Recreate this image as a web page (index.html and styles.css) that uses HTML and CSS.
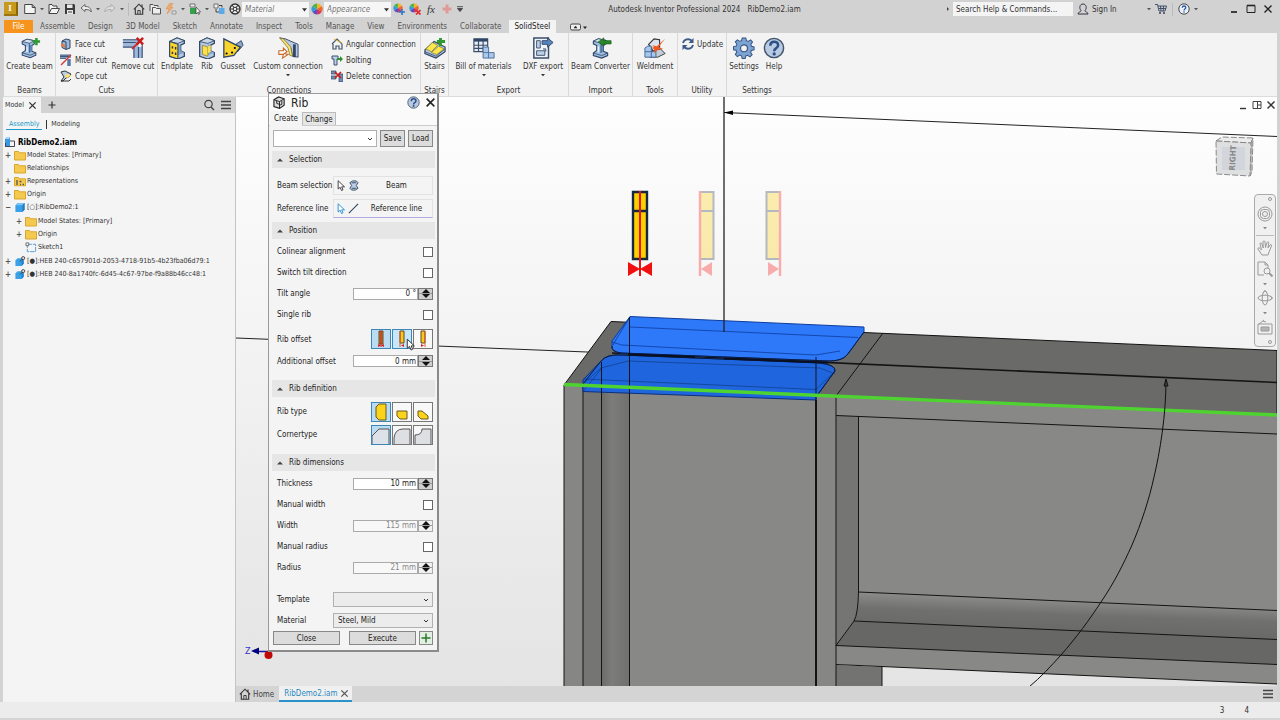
FILE: index.html
```html
<!DOCTYPE html>
<html lang="en">
<head>
<meta charset="utf-8">
<title>Autodesk Inventor Professional 2024 - RibDemo2.iam</title>
<link rel="stylesheet" href="styles.css">
</head>
<body>
<svg class="defs" aria-hidden="true">
  <symbol id="wheel" viewBox="0 0 12 12"><path d="M6 6V.5A5.5 5.5 0 0 1 10.800 3.200z" fill="#f7b52c"/><path d="M6 6l4.800-2.800a5.500 5.500 0 0 1 0 5.600z" fill="#f0662a"/><path d="M6 6l4.800 2.800A5.500 5.500 0 0 1 6 11.500z" fill="#d8345c"/><path d="M6 6v5.500a5.500 5.500 0 0 1-4.800-2.700z" fill="#5b4fc0"/><path d="M6 6L1.200 8.800a5.500 5.500 0 0 1 0-5.600z" fill="#2d9be0"/><path d="M6 6L1.200 3.200A5.500 5.500 0 0 1 6 .5z" fill="#4cb648"/></symbol>
  <symbol id="x" viewBox="0 0 10 10"><path d="M1.500 1.500l7 7M8.500 1.500l-7 7" stroke="currentColor" stroke-width="1.400" fill="none"/></symbol>
  <symbol id="menu" viewBox="0 0 10 10"><path d="M0 1.500h10M0 5h10M0 8.500h10" stroke="#444" stroke-width="1.400"/></symbol>
  <symbol id="home" viewBox="0 0 12 12"><path d="M.8 6.300L6 1.200l5.200 5.100M2.300 5.500v5.700h7.400V5.500M9 1.500v2.300" fill="none" stroke="#333" stroke-width="1.100"/><path d="M4.800 11V7.500h2.400V11" fill="none" stroke="#333" stroke-width=".9"/></symbol>
  <symbol id="folder" viewBox="0 0 12 10"><path d="M.5 1h4l1 1.300h6V9.500H.5z" fill="#f5c950" stroke="#d9a62c"/></symbol>
  <symbol id="cube" viewBox="0 0 12 12"><path d="M1 3.500L3.500 1H11v7.500L8.500 11H1z" fill="#3aa0e8"/><path d="M1 3.500L3.500 1H11L8.500 3.500z" fill="#7cc4f5"/><path d="M11 1v7.500L8.500 11V3.500z" fill="#1f80c8"/></symbol>
  <symbol id="part" viewBox="0 0 12 12"><path d="M1 4.500L3.500 2.500H10v6L7.800 11H1z" fill="#3aa0e8"/><path d="M10 4.500v4L7.800 11V5z" fill="#1f80c8"/><circle cx="9.500" cy="2.300" r="1.700" fill="#ddd" stroke="#333" stroke-width=".9"/><path d="M8.300 3.600L6 6" stroke="#333"/></symbol>
  <symbol id="beam" viewBox="0 0 24 24"><path d="M4 4l6-3 9 2v4l-3 2v7l5 2v3l-7 3-10-3v-3l4-3V9L4 7z" fill="#9dbde0" stroke="#2f4565" stroke-width="1.300"/><path d="M4 4l6-3 9 2-6 3z" fill="#d5e4f4" stroke="#2f4565" stroke-width=".9"/><path d="M13 8l3 1v7l-3 2z" fill="#5f8cbe"/><path d="M13 6v12M4 18l10 3 7-3" stroke="#2f4565" fill="none" stroke-width=".9"/><path d="M10 10v7" stroke="#e5f0fa" stroke-width="1.800"/></symbol>
  <symbol id="ibeam" viewBox="0 0 24 24"><path d="M4 5l8-4 8 3v3l-4 2v6l4 2v4l-7 3-9-3z" fill="#b3c9e4" stroke="#2f4565" stroke-width="1.400"/><path d="M4 5l8-4 8 3-7 3z" fill="#cbd8e8" stroke="#2f4565" stroke-width=".9"/><path d="M16 9v6l4 2-7 3V8z" fill="#7fa2cf"/></symbol>
  <symbol id="help" viewBox="0 0 24 24"><circle cx="12" cy="12" r="10.500" fill="#b8cbe3" stroke="#43536b" stroke-width="1.600"/><path d="M8 9.500C8 3.500 16.500 4 16.500 9c0 3.500-4.300 3.200-4.300 6.500" fill="none" stroke="#2e4f86" stroke-width="2.800"/><circle cx="12.200" cy="18.500" r="1.800" fill="#2e4f86"/></symbol>
  <symbol id="caret" viewBox="0 0 4 4"><path d="M0 1h4L2 3.300z" fill="currentColor"/></symbol>
  <symbol id="pointer" viewBox="0 0 12 16"><path d="M1.500 1v11l2.700-2.300L6 14l2-.9-1.800-4H10z" fill="#fff" stroke="currentColor" stroke-width="1.200"/></symbol>
</svg>

<header class="titlebar">
  <div class="quick">
    <button class="logo" aria-label="Inventor">I</button>
    <button class="ib" aria-label="New"><svg viewBox="0 0 12 12"><path d="M.7 1.500h7.500l3 3v6H.7zM8.200 1.500v3h3" fill="#f4f4f4" stroke="#444"/></svg></button>
    <button class="dd" aria-label="New options"><svg><use href="#caret"/></svg></button>
    <button class="ib" aria-label="Open"><svg viewBox="0 0 12 12"><path d="M1 10.500v-9h3l1 1.500h4v2.500M1 10.500l2.500-5h8l-2.500 5z" fill="#f4f4f4" stroke="#444"/></svg></button>
    <button class="ib" aria-label="Save"><svg viewBox="0 0 12 12"><path d="M1 1h9l1 1v9H1z" fill="#3b3b3b"/><path d="M3 1.500h5.500V5H3zM3 7h6v4H3z" fill="#e8e8e8"/><path d="M4 9h4" stroke="#3b3b3b"/></svg></button>
    <button class="ib" aria-label="Undo"><svg viewBox="0 0 12 12"><path d="M1 5l4-3.500v2c4 0 6 1.500 6.300 5.500C10 6.800 8 6.500 5 6.500v2z" fill="#eee" stroke="#555" stroke-width=".9"/></svg></button>
    <button class="dd" aria-label="Undo history"><svg><use href="#caret"/></svg></button>
    <button class="ib faint" aria-label="Redo"><svg viewBox="0 0 12 12"><path d="M11 5L7 1.500v2C3 3.500 1 5 .7 9 2 6.800 4 6.500 7 6.500v2z" fill="#eee" stroke="#777" stroke-width=".9"/></svg></button>
    <button class="dd" aria-label="Redo history"><svg><use href="#caret"/></svg></button>
    <i class="sep"></i>
    <button class="ib" aria-label="Home view"><svg><use href="#home"/></svg></button>
    <button class="ib" aria-label="Projects"><svg viewBox="0 0 12 12"><path d="M1 8V1.500h3l1 1h4V4M3.500 11V4.500h3l1 1h4V11z" fill="#ededed" stroke="#444" stroke-width=".9"/></svg></button>
    <button class="ib" aria-label="Update"><svg viewBox="0 0 12 12"><path d="M4.500.5L1 6h3L2 11l6-7H5L8 .5z" fill="#f0aa6a" stroke="#d98a48" stroke-width=".5"/><path d="M7 8h4v3H7z" fill="#ddd" stroke="#999"/></svg></button>
    <button class="dd" aria-label="Update options"><svg><use href="#caret"/></svg></button>
    <button class="ib" aria-label="Select"><svg viewBox="0 0 12 12"><path d="M1 1h5v3H1z" fill="#eee" stroke="#555" stroke-width=".8"/><path d="M1 5h6v6H1z" fill="#35a04a"/><path d="M7 4v7l1.500-1.500 1 2 1-.5-1-2h2z" fill="#fff" stroke="#333" stroke-width=".7"/></svg></button>
    <button class="dd" aria-label="Select options"><svg><use href="#caret"/></svg></button>
    <button class="ib" aria-label="Local update"><svg viewBox="0 0 12 12"><path d="M1 1h4v4H1z" fill="#eee" stroke="#555" stroke-width=".8"/><path d="M6 5h5.500v6H6z" fill="#5aa9e8"/><path d="M3 6v3h3M6 2.500h3v2" fill="none" stroke="#444"/></svg></button>
    <button class="ib" aria-label="Material browser"><svg viewBox="0 0 12 12"><circle cx="6" cy="6" r="5" fill="#eee" stroke="#333" stroke-width="1.300"/><path d="M3 2l6 8M9 2L3 10M1 6h10" stroke="#333" stroke-width="1.100"/><circle cx="6" cy="6" r="1.800" fill="#eee" stroke="#333"/></svg></button>
  </div>
  <select class="qsel" aria-label="Material"><option>Material</option></select>
  <button class="ib" aria-label="Adjust"><svg><use href="#wheel"/></svg></button>
  <select class="qsel" aria-label="Appearance"><option>Appearance</option></select>
  <div class="quick">
    <button class="ib" aria-label="Add appearance"><svg viewBox="0 0 12 12"><use href="#wheel" width="10" height="10"/><path d="M6 9h6M9 6v6" stroke="#2d78c8" stroke-width="1.600"/></svg></button>
    <button class="ib" aria-label="Clear appearance"><svg viewBox="0 0 12 12"><use href="#wheel" width="10" height="10"/><path d="M7 7l4.500 4.500M11.500 7L7 11.500" stroke="#e02b2b" stroke-width="1.700"/></svg></button>
    <button class="ib fx" aria-label="Parameters">fx</button>
    <button class="ib" aria-label="Add"><svg viewBox="0 0 12 12"><path d="M4.500 1.500h3v3h3v3h-3v3h-3v-3h-3v-3h3z" fill="#dd9c98"/></svg></button>
    <button class="dd wide" aria-label="Customize"><svg viewBox="0 0 6 6"><path d="M0 .7h6M.5 2.500h5L3 5.500z" stroke="#444" stroke-width=".9" fill="#444"/></svg></button>
  </div>
  <h1 class="app-title"><span>Autodesk Inventor Professional 2024</span><span>RibDemo2.iam</span></h1>
  <div class="account">
    <button class="dd" aria-label="Expand search"><svg viewBox="0 0 4 4"><path d="M1 0v4l2-2z" fill="#444"/></svg></button>
    <input class="search" type="text" placeholder="Search Help &amp; Commands..." aria-label="Search Help &amp; Commands">
    <button class="signin"><svg viewBox="0 0 12 12"><path d="M1 11h10c0-2-3-2-3-3.500 2-2 1.500-6.500-2-6.500S2 5.500 4 7.500C4 9 1 9 1 11z" fill="none" stroke="#334"/></svg>Sign In</button>
    <button class="dd" aria-label="Account menu"><svg><use href="#caret"/></svg></button>
    <button class="ib" aria-label="Store"><svg viewBox="0 0 12 12"><path d="M0 1.500h2.500L4 8h6l1.500-5H3M4 5.500h7M5.500 3l.5 5M8.500 3l-.3 5" fill="none" stroke="#35435c" stroke-width=".9"/><circle cx="5" cy="10" r="1" fill="#35435c"/><circle cx="9" cy="10" r="1" fill="#35435c"/></svg></button>
    <i class="sep"></i>
    <button class="ib" aria-label="Help"><svg viewBox="0 0 12 12"><circle cx="6" cy="6" r="5.200" fill="#eef2f8" stroke="#333" stroke-width=".9"/><path d="M4.300 4.800c0-2.500 3.500-2.300 3.500-.2C7.800 6 6 6 6 7.500" fill="none" stroke="#2459a8" stroke-width="1.300"/><circle cx="6" cy="9" r=".8" fill="#2459a8"/></svg></button>
    <button class="dd" aria-label="Help options"><svg><use href="#caret"/></svg></button>
  </div>
  <div class="winbtns">
    <button class="ib" aria-label="Minimize"><svg viewBox="0 0 12 12"><path d="M3 9h6" stroke="#222" stroke-width="1.700"/></svg></button>
    <button class="ib" aria-label="Maximize"><svg viewBox="0 0 12 12"><path d="M2 2.500h8v7H2z" fill="none" stroke="#222"/><path d="M2 2.500h8" stroke="#222" stroke-width="1.600"/></svg></button>
    <button class="ib" aria-label="Close"><svg class="s10"><use href="#x"/></svg></button>
  </div>
</header>

<nav class="tabs">
  <button class="file">File</button>
  <button>Assemble</button><button>Design</button><button>3D Model</button><button>Sketch</button><button>Annotate</button><button>Inspect</button><button>Tools</button><button>Manage</button><button>View</button><button>Environments</button><button>Collaborate</button>
  <button class="on">SolidSteel</button>
  <button class="rmin" aria-label="Minimize ribbon"><svg viewBox="0 0 18 8"><rect x=".5" y="1" width="10" height="6" rx="1.500" fill="#eee" stroke="#444"/><path d="M4 5h3L5.500 3z" fill="#222" stroke="#222" stroke-width=".5"/><path d="M13 3.500h4L15 6z" fill="#222"/></svg></button>
</nav>

<section class="ribbon">
  <div class="panel p-beams"><div class="tools">
    <button class="big"><svg viewBox="0 0 24 24"><use href="#beam" width="21" height="24"/><path d="M19 1v8M15 5h8" stroke="#2f9a2f" stroke-width="2.800"/></svg>Create beam</button></div><h2>Beams</h2></div>
  <div class="panel p-cuts"><div class="tools">
    <div class="stack">
      <button class="small"><svg viewBox="0 0 12 12"><path d="M2 3l4-2 4 1v8l-4 1.500-4-2z" fill="#9db8d8" stroke="#2f4565"/><path d="M2 3l4 1v7" fill="none" stroke="#2f4565"/><path d="M1 5l4 2v3L1 8z" fill="#e07a4c"/></svg>Face cut</button>
      <button class="small"><svg viewBox="0 0 12 12"><path d="M0 1h11v3H0zM7 5h4v7H7z" fill="#7d9cc4"/><path d="M0 2.500h9M9 5v7M0 1h11M0 4.500h6" stroke="#2f4565" stroke-width=".8"/><path d="M1 11L11 1" stroke="#d83a3a" stroke-width="1.500"/></svg>Miter cut</button>
      <button class="small"><svg viewBox="0 0 12 12"><path d="M1 2l4-1 6 3-2 3-3 1-3 3H1l3-4z" fill="#bdd0e8" stroke="#333"/><path d="M6 4l5 1-3 3-3-1z" fill="#fbe36c"/><path d="M1 11h8l2-2" stroke="#333" fill="none"/></svg>Cope cut</button>
    </div>
    <button class="big"><svg viewBox="0 0 24 24"><path d="M1 3h17v8H1zM13 11h9v12h-9z" fill="#9fb9dc"/><path d="M1 3h17M1 6h14M1 11h13M13 12v11M18 11v12M22 8v15" stroke="#3c5274" stroke-width="1.300"/><path d="M11 13L19 5" stroke="#d02828" stroke-width="2"/><path d="M16 1l7 7M23 1l-7 7" stroke="#c81e1e" stroke-width="2.800"/></svg>Remove cut</button></div><h2>Cuts</h2></div>
  <div class="panel p-conn"><div class="tools">
    <button class="big"><svg viewBox="0 0 24 24"><use href="#ibeam"/><path d="M4 5l9 3v16l-9-3z" fill="#fbd52c" stroke="#2f4565" stroke-width="1.200"/><path d="M7 10v2.500M7 16v2.500M10.500 11v2.500M10.500 17v2.500" stroke="#333" stroke-width="1.600"/></svg>Endplate</button>
    <button class="big"><svg viewBox="0 0 24 24"><use href="#ibeam"/><path d="M7 9l6 2v10l-6-2z" fill="#fbe04c" stroke="#8a7a2a" stroke-width=".8"/><path d="M16 9v7l-3 2V10z" fill="#fbe04c"/></svg>Rib</button>
    <button class="big"><svg viewBox="0 0 24 24"><path d="M15 8l6-4 2 5-6 7z" fill="#8fa6c4" stroke="#2f4565"/><path d="M2 2l18 9-7 9-11 2z" fill="#fbd52c" stroke="#2f4565" stroke-width="1.400"/><circle cx="5" cy="18" r="1.200"/><circle cx="11" cy="17" r="1.200"/><circle cx="14" cy="12" r="1.200"/></svg>Gusset</button>
    <button class="big"><svg viewBox="0 0 24 24"><path d="M3 1l6 1 14 6v14l-6-1-2-9z" fill="#b9cbe3" stroke="#2f4565"/><path d="M3 1l4 1 8 9 2 10-3-1-2-8z" fill="#fbe36c" stroke="#7a6a2a" stroke-width=".8"/><path d="M19 8v14" stroke="#2f4565" stroke-width="3"/><path d="M2 15h5v-3l4 4-3 2 4 1-6 4 1-4H2z" fill="#fff" stroke="#c86a2a" stroke-width="1.200"/></svg>Custom connection<svg class="tiny"><use href="#caret"/></svg></button>
    <div class="stack">
      <button class="small"><svg viewBox="0 0 12 12"><path d="M1 6l5-5 5 5M2 6v5h3V8h3v3h3V6" fill="none" stroke="#44546c" stroke-width="1.200"/><path d="M3 1l8 4" stroke="#d8b23c"/></svg>Angular connection</button>
      <button class="small"><svg viewBox="0 0 12 12"><path d="M1 2h6v3H6v6H3V5H1z" fill="#bdd0e8" stroke="#3c5274"/><path d="M6 4h3V2l3 3-3 3V6H6z" fill="#2f8f2f"/></svg>Bolting</button>
      <button class="small"><svg viewBox="0 0 12 12"><path d="M0 1h5v3H0zM8 4h4v8H8zM0 6h5v3H0z" fill="#6f8fb8" stroke="#34465f" stroke-width=".7"/><path d="M4 2l6 6M10 2L4 8" stroke="#c81e1e" stroke-width="1.700"/></svg>Delete connection</button>
    </div></div><h2>Connections</h2></div>
  <div class="panel p-stairs"><div class="tools">
    <button class="big"><svg viewBox="0 0 24 24"><path d="M1 14l10-9 12 6v5l-10 7-12-5z" fill="#b5cae4" stroke="#2f4565" stroke-width="1.300"/><path d="M2 13l7-7 6 3-7 7zM8 17l8-7 6 3-8 6z" fill="#fbe94c" stroke="#8a7a2a" stroke-width=".8"/><path d="M1 16l12 5 10-8" fill="none" stroke="#3c5274"/><path d="M18 1v9M14 5h9" stroke="#2f9a2f" stroke-width="3.200"/></svg>Stairs</button></div><h2>Stairs</h2></div>
  <div class="panel p-export"><div class="tools">
    <button class="big"><svg viewBox="0 0 24 24"><path d="M1 2h15v14H1z" fill="#e8eef6" stroke="#3c4f6b" stroke-width="1.300"/><path d="M1 2h15v3H1z" fill="#2f4565"/><path d="M1 9h15M1 12.500h15M6 4v12M11 4v12" stroke="#3c4f6b" stroke-width="1.300"/><path d="M11 11h6v6h6v6H11z" fill="#a9c8ec" stroke="#4c6c98"/><path d="M11 17h6v6" fill="none" stroke="#4c6c98"/></svg>Bill of materials<svg class="tiny"><use href="#caret"/></svg></button>
    <button class="big"><svg viewBox="0 0 24 24"><path d="M2 1h16v22H2z" fill="#eef3f9" stroke="#3c4f6b" stroke-width="1.600"/><path d="M5 4h4v8H5zM5 15h9v5H5zM12 13h3v3" fill="#bdd0e8" stroke="#3c4f6b"/><path d="M11 4h6V1l6 5-6 5V8h-6z" fill="#5585be" stroke="#2f4565"/></svg>DXF export<svg class="tiny"><use href="#caret"/></svg></button></div><h2>Export</h2></div>
  <div class="panel p-import"><div class="tools">
    <button class="big"><svg viewBox="0 0 24 24"><use href="#beam" width="22" height="24"/><path d="M9 5.500l6-4.500v3h8v3.500h-8V10z" fill="#2a8a2a" stroke="#1b5c1b" stroke-width=".8"/></svg>Beam Converter</button></div><h2>Import</h2></div>
  <div class="panel p-weld"><div class="tools">
    <button class="big"><svg viewBox="0 0 24 24"><path d="M5 8l6-6 6 1v13l-6 1z" fill="#dbe3ee" stroke="#333" stroke-width="1.200"/><path d="M6 16l12-3 5 5-8 4H6z" fill="#c3ccd9" stroke="#333"/><path d="M1 12l3-2h4v6h5v6H1z" fill="#a4c8f0" stroke="#46648c"/><path d="M1 16h7v6" fill="none" stroke="#46648c"/><path d="M9 9l5 1 9-8-7 9 5 2-6 1-3 4-1-5-3-1 3-1z" fill="#ee5a20"/></svg>Weldment</button></div><h2>Tools</h2></div>
  <div class="panel p-util"><div class="tools">
    <div class="stack"><button class="small"><svg viewBox="0 0 12 12"><path d="M1 5c1-4 6-5 9-2M11 7c-1 4-6 5-9 2" fill="none" stroke="#3c5a86" stroke-width="1.800"/><path d="M11.500 0v5h-5zM.5 12V7h5z" fill="#3c5a86"/></svg>Update</button></div></div><h2>Utility</h2></div>
  <div class="panel p-set"><div class="tools">
    <button class="big"><svg viewBox="0 0 24 24"><path d="M10 1h4l.6 3 2 .9L19.300 3.200l2 2.300-1.900 2.600.8 2 2.800.7v3.200l-3 .7-.8 2 1.700 2.600-2.400 2.300-2.600-1.700-2 .8-.6 2.800H10l-.7-3-2-.8-2.600 1.700-2.200-2.300 1.600-2.600-.8-2-2.800-.6v-3.400l3-.6.8-2-1.800-2.600 2.300-2.200 2.600 1.600 2-.7z" fill="#7ba3d4" stroke="#3b5680" stroke-width="1.100"/><circle cx="12" cy="12.300" r="3.800" fill="#f2f2f2" stroke="#3b5680" stroke-width="1.300"/></svg>Settings</button>
    <button class="big"><svg><use href="#help"/></svg>Help</button></div><h2>Settings</h2></div>
</section>

<main class="work">
  <aside class="browser">
    <div class="btabs">
      <button class="btab">Model <svg class="s8"><use href="#x"/></svg></button>
      <button class="ib" aria-label="Add panel"><svg class="s10" viewBox="0 0 10 10"><path d="M5 1.500v7M1.500 5h7" stroke="#333" stroke-width="1.200"/></svg></button>
      <span class="grow"></span>
      <button class="ib" aria-label="Search"><svg viewBox="0 0 12 12"><circle cx="5.500" cy="5" r="3.700" fill="none" stroke="#444" stroke-width="1.200"/><path d="M8 8l3 3" stroke="#444" stroke-width="1.500"/></svg></button>
      <button class="ib" aria-label="Menu"><svg class="s10"><use href="#menu"/></svg></button>
    </div>
    <div class="modes"><button class="on">Assembly</button><i></i><button>Modeling</button></div>
    <div class="root"><svg viewBox="0 0 12 12"><path d="M1 3l2-2h3v10H1z" fill="#3a97e0"/><path d="M1 3l2-2h3L5 3z" fill="#a8d8f8"/><path d="M6 5h4.500v5.500H1.500V7" fill="none" stroke="#445"/></svg>RibDemo2.iam</div>
    <ul class="tree">
      <li><b>+</b><svg><use href="#folder"/></svg>Model States: [Primary]</li>
      <li><b></b><svg><use href="#folder"/></svg>Relationships</li>
      <li><b>+</b><svg viewBox="0 0 12 10"><use href="#folder"/><path d="M3 3.500v5M6 8h1M8.500 8h1.500M5.500 5h2" stroke="#555" stroke-width="1.300"/></svg>Representations</li>
      <li><b>+</b><svg><use href="#folder"/></svg>Origin</li>
      <li><b>−</b><svg><use href="#cube"/></svg>[○]:RibDemo2:1</li>
    </ul>
    <ul class="tree sub">
      <li><b>+</b><svg><use href="#folder"/></svg>Model States: [Primary]</li>
      <li><b>+</b><svg><use href="#folder"/></svg>Origin</li>
      <li><b></b><svg viewBox="0 0 12 12"><path d="M2 2.500h9v8H2z" fill="none" stroke="#4a9ad8" stroke-dasharray="5 1"/><path d="M.5 1h3v3h-3z" fill="#fff" stroke="#444" stroke-width=".8"/></svg>Sketch1</li>
    </ul>
    <ul class="tree">
      <li><b>+</b><svg><use href="#part"/></svg>[●]:HEB 240-c657901d-2053-4718-91b5-4b23fba06d79:1</li>
      <li><b>+</b><svg><use href="#part"/></svg>[●]:HEB 240-8a1740fc-6d45-4c67-97be-f9a88b46cc48:1</li>
    </ul>
  </aside>

  <div class="stage">
    <div class="viewport">
      <svg class="scene" viewBox="236 97 1041 589" preserveAspectRatio="xMinYMin slice" role="img" aria-label="Steel beam model">
        <defs>
          <linearGradient id="sky" x1="0" y1="0" x2="0" y2="1"><stop offset="0" stop-color="#fefefe"/><stop offset="1" stop-color="#e4e4e4"/></linearGradient>
          <linearGradient id="fil" x1="1000" y1="598" x2="999" y2="627" gradientUnits="userSpaceOnUse"><stop offset="0" stop-color="#8a8a88"/><stop offset=".5" stop-color="#70706e"/><stop offset="1" stop-color="#6a6a68"/></linearGradient>
          <linearGradient id="round" x1="0" x2="1"><stop offset="0" stop-color="#6c6c6a"/><stop offset=".35" stop-color="#7c7c7a"/><stop offset="1" stop-color="#70706e"/></linearGradient>
        </defs>
        <rect x="236" y="97" width="1041" height="589" fill="url(#sky)"/>
        <path d="M724 112.500L1277 136.500" stroke="#222" fill="none"/>
        <path d="M724 112.500l9-2v4.500z"/>
        <path d="M236 338L612 353" stroke="#222"/>
        <path d="M611 321.500L1277 350.500V415L836 396 564 385z" fill="#6a6a68" stroke="#111"/>
        <path d="M564 385L836 396V686H564z" fill="#868684"/>
        <path d="M583 386L602 386V686H583z" fill="#757573"/>
        <path d="M602 386H630V686H602z" fill="url(#round)"/>
        <path d="M630 387L816 395V686H630z" fill="#888886"/>
        <path d="M836 665L882 667V686H836z" fill="#737371"/>
        <path d="M836 396L1277 415V684L836 664.500z" fill="#888886"/>
        <path d="M836 415.500L858.500 416.500V595Q858 614 854 621L836 645z" fill="#757573"/>
        <path d="M858 592L1277 610.500V640L854 621Q858 612 858 592z" fill="url(#fil)"/>
        <path d="M854 621L1277 639.500V664.500L836 645.500z" fill="#676765"/>
        <g fill="none" stroke="#141414">
          <path d="M836 415.500L1277 434M858.500 416.500V592Q858 614 854 621L836 645.500M858.500 592L1277 610.500M854 621L1277 639.500M836 645.500L1277 664.500M836 664.500L1277 684M836 396V686M882 667V686M836 396L883 333M564 385V686M583 386V686"/>
          <path d="M612 353L1277 382.500" stroke-width="1.600"/>
        </g>
        <path d="M583 380L601 361Q606 354 622 355L820 363Q836 365 835 371L816 397V400L583 391.500z" fill="#1f66de" stroke="#0b2f7c"/>
        <path d="M583 379L816 389.500L835 371M583 384L601 368 628 361 820 368 835 374M583 391.500L602 368" stroke="#12408f" fill="none" stroke-width=".8"/>
        <path d="M630 316.500L864 327V332L848 354Q843 361 829 361L620 353Q611 351 612 346V341z" fill="#2e78fa" stroke="#0d3c9c"/>
        <path d="M630 327L858 337.500M612 342L622 345 735 351 816 355 840 351M630 317L617 338 613 345" stroke="#0d3c9c" fill="none" stroke-width=".8"/>
        <path d="M612 346Q611 352 622 353L829 361Q842 361 847 355L864 332M583 384L601 361Q607 354 622 355L820 363Q836 365 835 371L816 397" stroke="#0a1c40" fill="none"/>
        <path d="M628 354.500L695 357M724 358.500L828 362.500" stroke="#0a1020" stroke-width="2"/>
        <path d="M601.500 362V686M629.500 317V686M816 357V686" stroke="#141414" fill="none"/>
        <path d="M816 400V686" stroke="#141414" stroke-width="2"/>
        <path d="M724 97V332" stroke="#222" stroke-width="1.300"/>
        <path d="M564 384.500L1277 415" stroke="#4fd330" stroke-width="3.400"/>
        <path d="M1166 380C1166 415 1160 452 1154 477C1149 500 1141 524 1132 545C1123 565 1114 583 1101 602C1090 619 1076 638 1061 655C1051 666 1041 677 1029 687" fill="none" stroke="#111"/>
        <path d="M1166 379l-2 7h4z" fill="none" stroke="#111"/>
        <g>
          <path d="M633 192h14v67h-14zM633 211h14" fill="#ffcf00" stroke="#14293f" stroke-width="2.400"/>
          <path d="M640 191v85" stroke="#e11" stroke-width="2"/><path d="M628 262v14l12-7zM652 262v14l-12-7z" fill="#f01010"/>
        </g>
        <g opacity=".3">
          <path d="M700 192h13.500v67H700zM700 211h13.500" fill="#ffcf00" stroke="#14293f" stroke-width="2"/>
          <path d="M700 191v85" stroke="#f00" stroke-width="2.400"/><path d="M712 262v14l-11-7z" fill="#f00"/>
          <path d="M766.500 192H780v67h-13.500zM766.500 211H780" fill="#ffcf00" stroke="#14293f" stroke-width="2"/>
          <path d="M780 191v85" stroke="#f00" stroke-width="2.400"/><path d="M768 262v14l11-7z" fill="#f00"/>
        </g>
        <g stroke="#8a8a8a" stroke-dasharray="6 2">
          <path d="M1216 141l6-4 31 1-2 5z" fill="#ececec"/><path d="M1251 143l2-5-1 34-2 4z" fill="#c4c4c4"/><path d="M1216 141l35 2-1 33-33.500-2z" fill="#dedfe1"/>
        </g>
        <path d="M1222 147h23v23h-23z" fill="#d2d6dc"/>
        <text class="cube-text" x="1233" y="158" transform="rotate(-87 1233 158)" text-anchor="middle" dominant-baseline="central">RIGHT</text>
        <path d="M268 651.500h-11" stroke="#1414a0" stroke-width="1.500"/><path d="M251 651l8-3.500v7z" fill="#000080"/>
        <text class="axis" x="245" y="654">Z</text><circle cx="268.500" cy="655" r="4" fill="#c00808"/>
      </svg>
      <div class="mdi">
        <button class="ib" aria-label="Minimize document"><svg viewBox="0 0 12 12"><path d="M3 9.500h6" stroke="#333" stroke-width="1.400"/></svg></button>
        <button class="ib" aria-label="Restore document"><svg viewBox="0 0 12 12"><path d="M2 2.500h8v7H2zM6.500 2.500v7M6.500 6h3.500" fill="none" stroke="#444"/></svg></button>
        <button class="ib" aria-label="Close document"><svg class="s10"><use href="#x"/></svg></button>
      </div>
      <div class="navbar">
        <i class="dot"></i>
        <button aria-label="Full navigation wheel"><svg viewBox="0 0 16 16"><circle cx="8" cy="8" r="7"/><rect x="3.500" y="3.500" width="9" height="9" rx="3"/><circle cx="8" cy="8" r="2.500"/></svg></button>
        <svg class="tiny"><use href="#caret"/></svg><hr>
        <button aria-label="Pan"><svg viewBox="0 0 16 16"><path d="M5 15L1 9c-.5-1.500 1-1.500 2-.5L4.500 10 3 4c0-1.500 1.500-1.500 2 0l1.200 4L6 2c0-1.500 2-1.500 2 0l.5 5.500L10 2.500c.5-1.300 2-.8 1.800.5L11 8l2-3c.8-1 2-.3 1.500 1L12 12l-1 3z"/></svg></button>
        <button aria-label="Zoom"><svg viewBox="0 0 16 16"><path d="M7 14H1V1h7l3 3v3M8 1v3h3"/><circle cx="10" cy="10" r="3"/><path d="M12 12l3.500 3.500" stroke-width="2"/></svg></button>
        <svg class="tiny"><use href="#caret"/></svg>
        <button aria-label="Orbit"><svg viewBox="0 0 16 16"><ellipse cx="8" cy="8" rx="7" ry="2.800"/><ellipse cx="8" cy="8" rx="2.800" ry="7"/><path d="M6 3l2-2.500L10 3M13 6l2.500 2-2.500 2"/></svg></button>
        <svg class="tiny"><use href="#caret"/></svg>
        <button aria-label="Look at"><svg viewBox="0 0 16 16"><path d="M1 5h14v10H1zM2 5l5-4M6 2l3 1"/><path d="M4 8h8v4H4z" fill="#b5b5b5"/></svg></button>
        <i class="dot"></i>
      </div>
    </div>
    <div class="docs">
      <button class="doc"><svg><use href="#home"/></svg>Home</button>
      <button class="doc on">RibDemo2.iam <svg class="s8"><use href="#x"/></svg></button>
      <span class="grow"></span>
      <button class="ib" aria-label="Document list"><svg class="s10"><use href="#menu"/></svg></button>
    </div>
  </div>
</main>
<footer class="status"><span>3</span><span>4</span></footer>

<form class="dialog" aria-label="Rib">
  <header class="dhead"><svg viewBox="0 0 14 14"><path d="M1 4l5-3 6 2v7l-5 3.300-6-2z" fill="#ddd" stroke="#222" stroke-width="1.200"/><path d="M1 4l6 2 5-3M7 6v7M4 5v3l3 1M9.500 5v4L7 10" fill="none" stroke="#222"/></svg><h2>Rib</h2>
    <button type="button" class="ib" aria-label="Help"><svg><use href="#help"/></svg></button>
    <button type="button" class="ib" aria-label="Close dialog"><svg class="s10"><use href="#x"/></svg></button></header>
  <div class="dtabs"><button type="button" class="on">Create</button><button type="button">Change</button></div>
  <div class="preset"><select class="combo" aria-label="Preset"><option></option></select><button type="button" class="btn">Save</button><button type="button" class="btn">Load</button></div>

  <h3>Selection</h3>
  <div class="sec s1">
    <div class="row"><label for="bsel">Beam selection</label><button type="button" id="bsel" class="pick"><svg class="ptr"><use href="#pointer"/></svg><svg viewBox="0 0 12 12"><path d="M2 3l3-2h4l2 2-2 3 2 3-3 2H4L2 9l2-3z" fill="#bdd0e8" stroke="#33475f"/><path d="M4 3h5M4 9h5" stroke="#33475f"/></svg><span>Beam</span></button></div>
    <div class="row"><label for="rline">Reference line</label><button type="button" id="rline" class="pick active"><svg class="ptr"><use href="#pointer"/></svg><svg viewBox="0 0 12 12"><path d="M1 11L11 1" stroke="#33475f" stroke-width="1.200"/></svg><span>Reference line</span></button></div>
  </div>

  <h3>Position</h3>
  <div class="sec s2">
    <div class="row"><label for="col">Colinear alignment</label><input type="checkbox" id="col"></div>
    <div class="row"><label for="tiltd">Switch tilt direction</label><input type="checkbox" id="tiltd"></div>
    <div class="row"><label for="tilt">Tilt angle</label><span class="spin"><input type="text" id="tilt" value="0 °"><span class="steps"><button type="button" aria-label="Increase"></button><button type="button" aria-label="Decrease"></button></span></span></div>
    <div class="row"><label for="single">Single rib</label><input type="checkbox" id="single"></div>
    <div class="row tall"><span>Rib offset</span><span class="opts">
      <button type="button" class="on" aria-label="Center"><svg viewBox="0 0 18 18"><path d="M7 1h4v13H7z" fill="#c07a2c" stroke="#6b4a24"/><path d="M9 1v16" stroke="#c82020"/><path d="M6 14v3l3-1.500zM12 14v3l-3-1.500z" fill="#d22"/></svg></button>
      <button type="button" class="on hover" aria-label="Left"><svg viewBox="0 0 18 18"><path d="M7 1h4v12H7z" fill="#fbc81c" stroke="#5d4a24"/><path d="M7 1v16" stroke="#d8602a"/><path d="M11 14v3l-3-1.500z" fill="#d22"/></svg></button>
      <button type="button" aria-label="Right"><svg viewBox="0 0 18 18"><path d="M7 1h4v12H7z" fill="#fbc81c" stroke="#5d4a24"/><path d="M11 1v16" stroke="#d8602a"/><path d="M7 14v3l3-1.500z" fill="#d22"/></svg></button>
      <svg class="cursor"><use href="#pointer"/></svg></span></div>
    <div class="row short"><label for="addo">Additional offset</label><span class="spin"><input type="text" id="addo" value="0 mm"><span class="steps"><button type="button" aria-label="Increase"></button><button type="button" aria-label="Decrease"></button></span></span></div>
  </div>

  <h3>Rib definition</h3>
  <div class="sec s3">
    <div class="row"><span>Rib type</span><span class="opts">
      <button type="button" class="on" aria-label="Full rib"><svg viewBox="0 0 18 18"><path d="M7 1h7v16H7l-3-3V4z" fill="#fbd21c" stroke="#6b5a1c"/></svg></button>
      <button type="button" aria-label="Partial rib"><svg viewBox="0 0 18 18"><path d="M4 8h10v8H7l-3-3z" fill="#fbd21c" stroke="#6b5a1c"/></svg></button>
      <button type="button" aria-label="Triangular rib"><svg viewBox="0 0 18 18"><path d="M4 8h4l6 5v3H7l-3-3z" fill="#fbd21c" stroke="#6b5a1c"/></svg></button></span></div>
    <div class="row"><span>Cornertype</span><span class="opts">
      <button type="button" class="on" aria-label="Straight corner"><svg viewBox="0 0 18 18"><path d="M0 18V10l7-7h10v15" fill="#dde1e8" stroke="#555"/></svg></button>
      <button type="button" aria-label="Round corner"><svg viewBox="0 0 18 18"><path d="M1 18v-6Q2 3 10 3h7v15" fill="#dddfe3" stroke="#555"/></svg></button>
      <button type="button" aria-label="Concave corner"><svg viewBox="0 0 18 18"><path d="M1 18V9Q8 9 8 3h9v15" fill="#dddfe3" stroke="#555"/></svg></button></span></div>
  </div>

  <h3>Rib dimensions</h3>
  <div class="sec s4">
    <div class="row"><label for="th">Thickness</label><span class="spin"><input type="text" id="th" value="10 mm"><span class="steps"><button type="button" aria-label="Increase"></button><button type="button" aria-label="Decrease"></button></span></span></div>
    <div class="row"><label for="mw">Manual width</label><input type="checkbox" id="mw"></div>
    <div class="row"><label for="wd">Width</label><span class="spin off"><input type="text" id="wd" value="115 mm" disabled><span class="steps"><button type="button" aria-label="Increase"></button><button type="button" aria-label="Decrease"></button></span></span></div>
    <div class="row"><label for="mr">Manual radius</label><input type="checkbox" id="mr"></div>
    <div class="row"><label for="rd">Radius</label><span class="spin off"><input type="text" id="rd" value="21 mm" disabled><span class="steps"><button type="button" aria-label="Increase"></button><button type="button" aria-label="Decrease"></button></span></span></div>
  </div>
  <div class="sec s5">
    <div class="row"><label for="tp">Template</label><select class="combo" id="tp"><option></option></select></div>
    <div class="row"><label for="mt">Material</label><select class="combo" id="mt"><option>Steel, Mild</option></select></div>
  </div>
  <div class="actions"><button type="button" class="btn">Close</button><button type="button" class="btn">Execute</button><button type="button" class="btn plus" aria-label="Add"><svg viewBox="0 0 10 10"><path d="M5 .5v9M.5 5h9" stroke="#2a7a2a" stroke-width="1.500"/></svg></button></div>
</form>
</body>
</html>
```
FILE: styles.css
```css
* { box-sizing: border-box; }
body {
  margin: 0;
  height: 100vh;
  display: flex;
  flex-direction: column;
  overflow: hidden;
  background: #d2d2d2;
  color: #333;
  font: 8px/13px "DejaVu Sans Condensed", "DejaVu Sans", sans-serif;
}
button, input, select { font: inherit; color: inherit; margin: 0; padding: 0; border: 0; background: none; border-radius: 0; }
button { white-space: nowrap; }
h1, h2, h3 { margin: 0; font: inherit; }
ul { margin: 0; padding: 0; list-style: none; }
svg { display: block; flex: none; }
.defs { position: absolute; width: 0; height: 0; }
.grow { flex: 1; }

/* shared small controls */
.ib { display: flex; align-items: center; justify-content: center; width: 12px; height: 12px; flex: none; }
.ib svg { width: 12px; height: 12px; }
.ib svg.s10, .s10 { width: 10px; height: 10px; }
.s8 { width: 9px; height: 9px; }
.dd { width: 4px; height: 12px; display: flex; align-items: center; flex: none; color: #555; }
.dd svg { width: 4px; height: 4px; }
.dd.wide, .dd.wide svg { width: 6px; }
.dd.wide svg { height: 6px; }
.sep { width: 1px; height: 13px; background: #bbb; }
.tiny { width: 4px; height: 4px; }
.faint { opacity: .45; }

/* title bar */
.titlebar { display: flex; align-items: center; height: 18px; flex: none; padding-left: 4px; }
.quick, .account { display: flex; align-items: center; gap: 4px; flex: none; }
.logo { width: 14px; height: 14px; margin-right: 2px; background: #c79a1e; color: #fff; font: bold 9px/12px "Liberation Serif", serif; border-right: 2px solid #8a6508; border-bottom: 2px solid #9c7410; }
.qsel {
  appearance: none; width: 67px; height: 15px; margin: 0 2px 0 1px; padding: 1px 0 0 3px; flex: none;
  font-style: italic; color: #777;
  background: #f6f6f6 url("data:image/svg+xml,%3Csvg xmlns='http://www.w3.org/2000/svg' viewBox='0 0 4 4'%3E%3Cpath d='M0 1h4L2 3.500z' fill='%23333'/%3E%3C/svg%3E") no-repeat right 2px center / 5px 5px;
}
.fx { font: italic 11px/12px "Liberation Serif", serif; }
.app-title { flex: 1; display: flex; justify-content: center; gap: 7px; white-space: nowrap; }
.search { width: 120px; height: 14px; padding: 0 3px; background: #f4f4f4; }
.search::placeholder { color: #333; opacity: 1; }
.account .search { margin-left: -1px; }
.signin { display: flex; align-items: center; gap: 3px; width: 66px; }
.signin svg { width: 12px; height: 12px; }
.account .sep { margin: 0 1px; }
.winbtns { display: flex; gap: 5px; margin-left: 30px; padding-right: 6px; }
.winbtns .ib { color: #222; }

/* ribbon tabs */
.tabs { display: flex; align-items: flex-end; gap: 1px; height: 15px; padding-left: 4px; flex: none; }
.tabs button { height: 13px; padding: 0 6px; color: #555; }
.tabs .file { width: 29px; padding: 0; background: #f7941d; color: #fff; }
.tabs .on { background: #f3f3f3; color: #222; }
.tabs .rmin svg { width: 18px; height: 8px; }
.tabs .rmin { padding-left: 13px; }

/* ribbon */
.ribbon { display: flex; height: 64px; flex: none; margin: 0 3px 0 4px; background: #f3f3f3; border-bottom: 1px solid #dcdcdc; }
.panel { display: flex; flex-direction: column; padding-top: 3px; border-right: 1px solid #d9d9d9; flex: none; }
.panel h2 { height: 12px; text-align: center; }
.tools { display: grid; flex: 1; align-items: start; }
.big { display: flex; flex-direction: column; align-items: center; padding-top: 1px; }
.big > svg:first-child { width: 22px; height: 22px; margin-bottom: 1px; }
.stack { display: flex; flex-direction: column; }
.small { display: flex; align-items: center; gap: 3px; height: 16px; }
.small svg { width: 12px; height: 12px; }
.p-beams { width: 52px; }
.p-cuts { width: 102px; }
.p-cuts .tools { grid-template-columns: 53px 48px; }
.p-cuts .stack { padding-left: 4px; }
.p-conn { width: 263px; }
.p-conn .tools { grid-template-columns: 38px 22px 30px 80px 1fr; }
.p-conn .stack { padding-left: 3px; }
.p-stairs { width: 28px; }
.p-export { width: 120px; }
.p-export .tools { grid-template-columns: 69px 50px; }
.p-import { width: 64px; }
.p-weld { width: 45px; }
.p-util { width: 49px; }
.p-util .stack { padding-left: 4px; }
.p-set { width: 60px; border: 0; }
.p-set .tools { grid-template-columns: 34px 26px; }

/* work area */
.work { flex: 1; min-height: 0; display: flex; margin: 0 3px; }
.browser { width: 233px; flex: none; background: #f4f4f4; border-right: 1px solid #c4c4c4; font-size: 7px; }
.btabs { display: flex; align-items: center; gap: 5px; height: 16px; background: #d2d2d2; padding-right: 3px; }
.btab { display: flex; align-items: center; gap: 4px; height: 16px; width: 38px; padding-left: 2px; background: #f4f4f4; }
.modes { display: flex; align-items: center; gap: 4px; height: 22px; padding: 0 3px; }
.modes button { height: 12px; line-height: 12px; }
.modes .on { padding: 0 3px; color: #1a9ac8; border-bottom: 1px solid #1a9ac8; }
.modes i { width: 1px; height: 9px; background: #333; }
.root { display: flex; align-items: center; gap: 2px; height: 14px; padding-left: 1px; font-size: 8px; font-weight: 700; color: #000; }
.root svg { width: 12px; height: 12px; }
.tree li { display: flex; align-items: center; height: 13px; gap: 1px; white-space: nowrap; }
.tree b { width: 10px; text-align: center; font-size: 8px; font-weight: 700; color: #555; }
.tree svg { width: 12px; height: 11px; }
.tree.sub { padding-left: 11px; margin: 1px 0; }

.stage { flex: 1; min-width: 0; display: flex; flex-direction: column; }
.viewport { position: relative; flex: 1; min-height: 0; overflow: hidden; }
.scene { width: 100%; height: 100%; }
.cube-text { font: 700 8px "DejaVu Sans Condensed", sans-serif; fill: #888; }
.axis { font: 9px "DejaVu Sans Condensed", sans-serif; fill: #3434c8; }
.mdi { position: absolute; top: 2px; right: 0; display: flex; gap: 2px; color: #333; }
.navbar { position: absolute; top: 97px; right: 1px; width: 22px; height: 153px; display: flex; flex-direction: column; align-items: center; justify-content: space-between; padding: 2px 0; border: 1px solid #aaa; border-radius: 4px; background: #f0f0f0; color: #888; }
.navbar button svg { width: 16px; height: 16px; fill: none; stroke: #999; }
.navbar hr { width: 18px; margin: 0; border: 0; border-top: 1px solid #bbb; }
.dot { width: 4px; height: 4px; border: 1px solid #999; border-radius: 50%; align-self: flex-end; margin-right: 3px; }

.docs { display: flex; align-items: center; height: 16px; flex: none; background: #d4d4d4; padding-right: 3px; }
.doc { display: flex; align-items: center; gap: 2px; height: 16px; padding: 0 5px 0 3px; color: #444; }
.doc svg { width: 12px; height: 12px; }
.doc svg.s8 { width: 9px; height: 9px; color: #555; }
.doc.on { background: #f0f0f0; color: #2a8ac4; border-bottom: 2px solid #2a93cc; padding: 0 3px 0 5px; }
.status { display: flex; justify-content: flex-end; align-items: center; gap: 20px; height: 18px; flex: none; padding-right: 31px; background: #ececec; border-bottom: 2px solid #d4d4d4; }

/* rib dialog */
.dialog { position: absolute; left: 268px; top: 93px; width: 171px; display: flex; flex-direction: column; background: #f4f4f4; border: 1px solid #9a9a9a; border-right: 2px solid #8a8a8a; border-bottom: 2px solid #8a8a8a; padding: 0 0 5px; color: #222; }
.dhead { display: flex; align-items: center; gap: 5px; height: 17px; padding: 0 1px 0 4px; background: #fafafa; }
.dhead > svg { width: 13px; height: 13px; }
.dhead h2 { flex: 1; font-size: 12px; line-height: 16px; }
.dhead .ib { color: #222; }
.dhead .ib svg { width: 13px; height: 13px; }
.dhead .ib svg.s10 { width: 11px; height: 11px; }
.dtabs { display: flex; align-items: flex-end; height: 15px; padding: 0 0 0 1px; background: #fafafa; border-bottom: 1px solid #ccc; }
.dtabs button { height: 13px; width: 34px; background: #e6e6e6; border: 1px solid #bbb; border-bottom: 0; }
.dtabs .on { height: 15px; width: 32px; background: #f4f4f4; border: 0; margin-bottom: -1px; }
.preset { display: flex; align-items: center; gap: 3px; height: 25px; padding: 0 4px; }
.combo {
  appearance: none; flex: none; width: 100px; height: 15px; padding-left: 4px; border: 1px solid #b0b0b0;
  background: #ececec url("data:image/svg+xml,%3Csvg xmlns='http://www.w3.org/2000/svg' viewBox='0 0 6 6'%3E%3Cpath d='M1 2l2 2 2-2' fill='none' stroke='%23333'/%3E%3C/svg%3E") no-repeat right 3px center / 6px 6px;
}
.preset .combo { flex: 1; height: 17px; background-color: #fff; }
.btn { height: 15px; background: #dcdcdc; border: 1px solid #888; text-align: center; }
.preset .btn { width: 25px; height: 17px; }
.dialog h3 { height: 17px; line-height: 18px; margin: 0 2px 0 3px; padding-left: 17px; background: #e6e6e6 url("data:image/svg+xml,%3Csvg xmlns='http://www.w3.org/2000/svg' viewBox='0 0 6 6'%3E%3Cpath d='M0 4.500h6L3 1.500z' fill='%23444'/%3E%3C/svg%3E") no-repeat 5px center / 6px 6px; }
.sec { padding: 2px 4px 0 8px; }
.row { display: flex; align-items: center; justify-content: space-between; height: 21px; white-space: nowrap; }
.s1 { padding-top: 6px; padding-bottom: 2px; }
.s1 .row, .s3 .row { height: 23px; }
.s2 { padding-bottom: 11px; }
.s3 { padding-top: 3px; padding-bottom: 8px; }
.s5 { padding-top: 11px; }
.row.tall { height: 28px; }
.row.short { height: 16px; }
.pick { display: flex; align-items: center; gap: 2px; width: 100px; height: 19px; padding-left: 3px; border: 1px solid #e2e2e2; }
.pick span { flex: 1; text-align: center; }
.pick svg { width: 11px; height: 11px; }
.pick .ptr { width: 9px; height: 12px; color: #333; }
.pick.active { border-bottom-color: #b4a8e0; }
.pick.active .ptr { color: #1d8ad0; }
input[type="checkbox"] { appearance: none; width: 10px; height: 10px; border: 1px solid #666; background: #fff; }
.spin { display: flex; width: 80px; height: 12px; }
.spin input { flex: 1; min-width: 0; padding-right: 1px; text-align: right; background: #fff; border: 1px solid #aaa; }
.spin.off input { color: #888; background: #f8f8f8; }
.steps { width: 15px; display: flex; flex-direction: column; background: #cfcfcf; border: 1px solid #777; }
.off .steps { background: #f0f0f0; border-color: #aaa; }
.steps button { flex: 1; display: flex; justify-content: center; align-items: center; }
.steps button::before { content: ""; border: 4px solid transparent; border-top: 0; border-bottom: 4px solid #111; }
.steps button + button { border-top: 1px solid #999; }
.steps button + button::before { border-bottom: 0; border-top: 4px solid #111; }
.opts { position: relative; display: flex; gap: 1px; }
.opts button { width: 20px; height: 20px; background: #f8f8f8; border: 1px solid #777; }
.opts button svg { width: 18px; height: 18px; }
.opts .on { background: #b9dcf2; border-color: #3f86b8; }
.opts .hover { background: #c8e6fa; }
.cursor { position: absolute; left: 35px; top: 9px; width: 10px; height: 14px; color: #333; }
.actions { display: flex; padding: 0 4px; }
.actions .btn { width: 67px; height: 14px; margin-right: auto; }
.actions .btn + .btn { margin-right: 3px; }
.actions .btn.plus { width: 14px; padding: 1px; margin-right: 0; background: #e4efe4; }
.plus svg { width: 10px; height: 10px; }
```
